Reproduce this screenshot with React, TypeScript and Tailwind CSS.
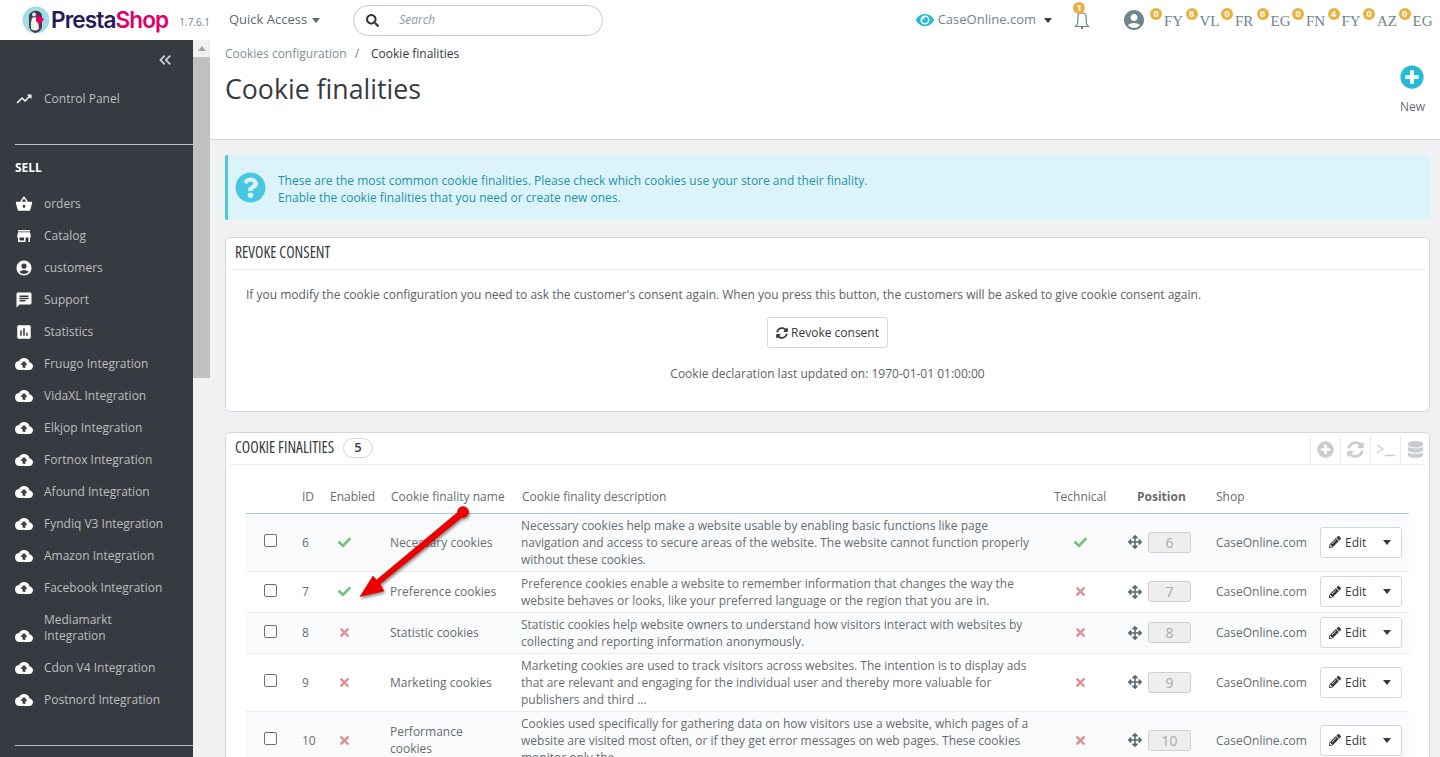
import { FaArrowsAlt, FaCheck, FaDatabase, FaEye, FaPencilAlt, FaPlusCircle, FaQuestionCircle, FaSearch, FaSyncAlt, FaTimes } from "react-icons/fa";
import { MdAccountCircle, MdAssessment, MdChat, MdCloudUpload, MdKeyboardDoubleArrowLeft, MdShoppingBasket, MdStore, MdTrendingUp } from "react-icons/md";
import type { ReactNode } from "react";

const integrations = ["Fruugo Integration", "VidaXL Integration", "Elkjop Integration", "Fortnox Integration", "Afound Integration", "Fyndiq V3 Integration", "Amazon Integration", "Facebook Integration"];

const notifications = [
  ["0", "FY"], ["8", "VL"], ["0", "FR"], ["0", "EG"], ["0", "FN"], ["4", "FY"], ["0", "AZ"], ["0", "EG"],
];

const rows = [
  { id: 6, enabled: true, name: "Necessary cookies", technical: true, desc: "Necessary cookies help make a website usable by enabling basic functions like page navigation and access to secure areas of the website. The website cannot function properly without these cookies." },
  { id: 7, enabled: true, name: "Preference cookies", technical: false, desc: "Preference cookies enable a website to remember information that changes the way the website behaves or looks, like your preferred language or the region that you are in." },
  { id: 8, enabled: false, name: "Statistic cookies", technical: false, desc: "Statistic cookies help website owners to understand how visitors interact with websites by collecting and reporting information anonymously." },
  { id: 9, enabled: false, name: "Marketing cookies", technical: false, desc: "Marketing cookies are used to track visitors across websites. The intention is to display ads that are relevant and engaging for the individual user and thereby more valuable for publishers and third ..." },
  { id: 10, enabled: false, name: "Performance cookies", technical: false, desc: "Cookies used specifically for gathering data on how visitors use a website, which pages of a website are visited most often, or if they get error messages on web pages. These cookies monitor only the" },
];

function Caret({ className }: { className: string }) {
  return <span className={`inline-block w-0 h-0 border-x-[4px] border-x-transparent border-t-[5px] ${className}`} />;
}

function SideItem({ icon, label }: { icon: ReactNode; label: string }) {
  return (
    <div className="h-8 flex items-center pl-[15px] gap-[11px] text-[12px] text-[#bebebe]">
      <span className="w-[18px] flex justify-center text-white text-[20px]">{icon}</span>
      <span>{label}</span>
    </div>
  );
}

function Sidebar() {
  return (
    <aside className="w-[193px] shrink-0 bg-[#363a41] overflow-hidden">
      <div className="h-[43px] flex items-center justify-end pr-[18px] pb-[4px] text-[#d5d7d9] text-[20px]">
        <MdKeyboardDoubleArrowLeft />
      </div>
      <SideItem icon={<MdTrendingUp />} label="Control Panel" />
      <div className="h-[29px]" />
      <div className="ml-[15px] border-t border-[#bebebe]" />
      <div className="h-[43px] pl-[15px] pt-[2px] flex items-center text-[12px] font-bold text-white">SELL</div>
      <SideItem icon={<MdShoppingBasket />} label="orders" />
      <SideItem icon={<MdStore />} label="Catalog" />
      <SideItem icon={<MdAccountCircle />} label="customers" />
      <SideItem icon={<MdChat />} label="Support" />
      <SideItem icon={<MdAssessment />} label="Statistics" />
      {integrations.map((name) => (
        <SideItem key={name} icon={<MdCloudUpload />} label={name} />
      ))}
      <div className="h-[48px] flex items-center pl-[15px] gap-[11px] text-[12px] leading-4 text-[#bebebe]">
        <span className="w-[18px] flex justify-center text-white text-[20px] mt-4"><MdCloudUpload /></span>
        <span>Mediamarkt<br />Integration</span>
      </div>
      <SideItem icon={<MdCloudUpload />} label="Cdon V4 Integration" />
      <SideItem icon={<MdCloudUpload />} label="Postnord Integration" />
      <div className="h-[29px]" />
      <div className="ml-[15px] border-t border-[#bebebe]" />
    </aside>
  );
}

function Logo() {
  return (
    <svg width="30" height="30" viewBox="0 0 30 30" className="shrink-0">
      <circle cx="15" cy="15" r="13.5" fill="#a6dbe8" />
      <path d="M8 10 Q11 5 17 6 Q22 8 21 14 L21 22 Q20 27 14 28 Q8 26 8 20Z" fill="#3b3f48" />
      <path d="M11 13 Q15 11 17 14 L18 24 Q14 27 10 24 Q9 18 11 13Z" fill="#f4f2ea" />
      <path d="M15 9 L23 14 L19 20 L15 16Z" fill="#df0067" />
      <circle cx="13" cy="9.5" r="2" fill="#e8e8e8" />
    </svg>
  );
}

function TopBar() {
  return (
    <header className="h-10 shrink-0 bg-white flex items-center relative">
      <div className="ml-[21px] flex items-center w-[208px]">
        <Logo />
        <span className="font-['Inter',sans-serif] text-[22.6px] font-semibold tracking-[-0.9px] text-[#251b5b] leading-none">
          Presta<span className="text-[#df0067]">Shop</span>
        </span>
        <span className="ml-[11px] mt-[4px] text-[10px] text-[#6c868e]">1.7.6.1</span>
      </div>
      <div className="flex items-center gap-[5px] text-[13px] text-[#5a6a70]">
        Quick Access <Caret className="border-t-[#5a6a70]" />
      </div>
      <div className="ml-[33px] w-[250px] h-[31px] rounded-full border border-[#bbcdd2] flex items-center pl-3 text-[#363a41]">
        <FaSearch className="text-[13px]" />
        <span className="ml-[20px] text-[12px] italic text-[#8a9a9f]">Search</span>
      </div>
      <div className="ml-auto flex items-center">
        <FaEye className="text-[18px] text-[#25b9d7]" />
        <span className="ml-[4px] text-[13px] text-[#6c868e]">CaseOnline.com</span>
        <Caret className="ml-[8px] border-t-[#363a41]" />
        <span className="relative ml-[22px] w-4 h-[22px] flex items-center justify-center">
          <svg width="16" height="20" viewBox="0 0 16 20" fill="none" stroke="#6c868e" strokeWidth="1.2">
            <path d="M4 6 Q4 3 8 3 Q12 3 12 6 L12.5 14 L14.5 16.5 L1.5 16.5 L3.5 14Z" />
            <path d="M7 18 h2" strokeWidth="2" />
          </svg>
          <span className="absolute left-[-1px] top-[-7px] w-[12px] h-[12px] rounded-full bg-[#ecb040] text-white text-[9px] font-bold flex items-center justify-center">1</span>
        </span>
        <MdAccountCircle className="ml-[32px] text-[24px] text-[#6c868e]" />
        <div className="ml-[4px] mr-[6px] flex items-start">
          {notifications.map(([count, code], i) => (
            <span key={i} className="w-[35.5px] flex items-start">
              <span className="w-[12px] h-[12px] mt-[-4px] rounded-full bg-[#ecb040] text-white text-[9px] font-bold flex items-center justify-center shrink-0">{count}</span>
              <span className="ml-[2px] mt-[1px] font-['Liberation_Serif',serif] text-[15px] leading-4 text-[#6c868e]">{code}</span>
            </span>
          ))}
        </div>
      </div>
    </header>
  );
}

function PanelTitle({ children }: { children: ReactNode }) {
  return <span className="text-[15.5px] text-[#363a41] [font-stretch:75%] inline-block">{children}</span>;
}

function ToolIcon({ children }: { children: ReactNode }) {
  return <span className="w-[30px] h-[29px] border-l border-[#eaebec] flex items-center justify-center text-[#c9cdcf] text-[17px]">{children}</span>;
}

function RowMark({ on }: { on: boolean }) {
  return on ? <FaCheck className="text-[#72c279] text-[13px]" /> : <FaTimes className="text-[#e08f95] text-[13px]" />;
}

function CookieRow({ row, index }: { row: (typeof rows)[number]; index: number }) {
  return (
    <tr className={`border-b border-[#eaebec] ${index % 2 === 0 ? "bg-[#fafbfc]" : "bg-white"}`}>
      <td className="pl-[18px]"><span className="block w-[13px] h-[13px] mb-[3px] border border-[#6f6f6f] rounded-[2px] bg-white" /></td>
      <td className="pl-[10px]">{row.id}</td>
      <td className="pl-[18px]"><RowMark on={row.enabled} /></td>
      <td className="pl-[9px] pr-2">{row.name}</td>
      <td className="pl-[9px] pr-[12px] py-[3px]">{row.desc}</td>
      <td className="pl-[30px]"><RowMark on={row.technical} /></td>
      <td className="pl-[1px]">
        <div className="flex items-center gap-[6px]">
          <FaArrowsAlt className="text-[14px] text-[#5b6a70]" />
          <span className="w-[43px] h-[21px] bg-[#eeeeee] border border-[#cfcfcf] rounded-[3px] flex items-center justify-center text-[#a8a8a8] text-[14px]">{row.id}</span>
        </div>
      </td>
      <td className="pl-[10px]">CaseOnline.com</td>
      <td className="pl-[10px]">
        <div className="w-[82px] h-[31px] border border-[#d3d8db] rounded-[3px] bg-white flex items-center pl-2 text-[#363a41]">
          <FaPencilAlt className="text-[12px]" />
          <span className="ml-[4px]">Edit</span>
          <Caret className="ml-auto mr-[10px] border-t-[#363a41]" />
        </div>
      </td>
    </tr>
  );
}

function CookieTable() {
  return (
    <table className="ml-[20px] w-[1163px] table-fixed border-collapse text-[12px] leading-[17px] text-[#666d71]">
      <colgroup>
        <col className="w-[46px]" />
        <col className="w-[28px]" />
        <col className="w-[61px]" />
        <col className="w-[131px]" />
        <col className="w-[532px]" />
        <col className="w-[83px]" />
        <col className="w-[79px]" />
        <col className="w-[104px]" />
        <col className="w-[99px]" />
      </colgroup>
      <thead>
        <tr className="h-[48px] border-b border-[#a9cbe0] text-left text-[#666d71] [&>th]:align-bottom [&>th]:pb-[8px]">
          <th />
          <th className="pl-[10px] font-normal">ID</th>
          <th className="pl-[10px] font-normal">Enabled</th>
          <th className="pl-[10px] font-normal">Cookie finality name</th>
          <th className="pl-[10px] font-normal">Cookie finality description</th>
          <th className="pl-[10px] font-normal">Technical</th>
          <th className="pl-[10px] font-bold">Position</th>
          <th className="pl-[10px] font-normal">Shop</th>
          <th />
        </tr>
      </thead>
      <tbody>
        {rows.map((row, i) => (
          <CookieRow key={row.id} row={row} index={i} />
        ))}
      </tbody>
    </table>
  );
}

export default function App() {
  return (
    <div className="relative h-[757px] overflow-hidden flex flex-col bg-white font-['Open_Sans',sans-serif]">
      <TopBar />
      <div className="flex flex-1 min-h-0">
        <Sidebar />
        <div className="w-[17px] shrink-0 bg-[#f1f1f1] flex flex-col items-center">
          <div className="h-[17px] flex items-center">
            <span className="w-0 h-0 border-x-[4px] border-x-transparent border-b-[5px] border-b-[#a3a3a3]" />
          </div>
          <div className="w-full h-[321px] bg-[#c1c1c1]" />
        </div>
        <main className="flex-1 min-w-0 bg-[#eff1f2] overflow-hidden">
          <div className="h-[100px] bg-white border-b border-[#d3d8db] pl-[15px] pr-[15px] flex justify-between">
            <div>
              <div className="mt-[5px] text-[12px] leading-[18px] text-[#363a41]">
                <span className="text-[#7d8f95]">Cookies configuration</span>
                <span className="text-[#6c868e] ml-[8px] mr-[12px]">/</span>
                Cookie finalities
              </div>
              <h1 className="mt-[8px] text-[26.7px] leading-9 text-[#363a41]">Cookie finalities</h1>
            </div>
            <div className="mt-[25px] flex flex-col items-center">
              <FaPlusCircle className="text-[24px] text-[#25b9d7]" />
              <span className="mt-[10px] text-[12px] text-[#666d71] leading-4">New</span>
            </div>
          </div>
          <div className="pl-[15px] pr-[10px] pt-[15px]">
            <div className="h-[65px] bg-[#dcf4f9] border-l-[3px] border-[#4ac7e0] rounded-[2px] flex items-center text-[12px] leading-[17px] text-[#1f93a8]">
              <FaQuestionCircle className="ml-[7px] text-[31px] text-[#4ac7e0]" />
              <div className="ml-[12px] mt-[3px] leading-[17px]">
                These are the most common cookie finalities. Please check which cookies use your store and their finality.
                <br />
                Enable the cookie finalities that you need or create new ones.
              </div>
            </div>
            <section className="mt-[17px] h-[175px] bg-white border border-[#d3d8db] rounded-[5px] px-[4px]">
              <div className="h-[32px] border-b border-[#eaebec] flex items-center pl-[5px] pb-[1px]">
                <PanelTitle>REVOKE CONSENT</PanelTitle>
              </div>
              <p className="mt-[16px] ml-[16px] text-[12px] leading-[17px] text-[#5a6268]">
                If you modify the cookie configuration you need to ask the customer's consent again. When you press this button, the customers will be asked to give cookie consent again.
              </p>
              <div className="mt-[14px] flex justify-center">
                <div className="w-[121px] h-[31px] pt-[1px] border border-[#d3d8db] rounded-[3px] flex items-center justify-center gap-[3px] text-[12px] text-[#363a41]">
                  <FaSyncAlt className="text-[12px]" /> Revoke consent
                </div>
              </div>
              <p className="mt-[17px] text-center text-[12px] leading-[17px] text-[#5a6268]">Cookie declaration last updated on: 1970-01-01 01:00:00</p>
            </section>
            <section className="mt-[20px] bg-white border border-[#d3d8db] rounded-[5px]">
              <div className="mx-[4px] h-[32px] border-b border-[#eaebec] flex items-center pl-[5px] pb-[1px]">
                <PanelTitle>COOKIE FINALITIES</PanelTitle>
                <span className="ml-[9px] w-[30px] h-[20px] border border-[#d3d8db] rounded-full flex items-center justify-center text-[13px] font-semibold text-[#363a41]">5</span>
                <div className="ml-auto -mr-[5px] -mb-[1px] flex items-center self-end">
                  <ToolIcon><FaPlusCircle /></ToolIcon>
                  <ToolIcon><FaSyncAlt /></ToolIcon>
                  <ToolIcon>
                    <svg width="20" height="14" viewBox="0 0 20 14" fill="none" stroke="#c9cdcf" strokeWidth="1.3">
                      <path d="M1 2 L7 6 L1 10 M9 12.5 H19" />
                    </svg>
                  </ToolIcon>
                  <ToolIcon><FaDatabase /></ToolIcon>
                </div>
              </div>
              <CookieTable />
            </section>
          </div>
        </main>
      </div>
      <svg className="absolute left-[350px] top-[500px] pointer-events-none" width="125" height="110" viewBox="350 500 125 110">
        <defs>
          <filter id="arrowShadow" x="-20%" y="-20%" width="140%" height="140%">
            <feDropShadow dx="1" dy="2" stdDeviation="1.5" floodColor="#000" floodOpacity="0.45" />
          </filter>
        </defs>
        <g filter="url(#arrowShadow)">
          <path d="M461 509.5 L465.5 514.5 L380 584 L384 591 L360 596.5 L373 576 L376.5 580Z" fill="#ee0000" stroke="#b00000" strokeWidth="0.5" />
          <circle cx="463" cy="512" r="5.5" fill="#ee0000" stroke="#b00000" strokeWidth="0.5" />
        </g>
      </svg>
    </div>
  );
}
